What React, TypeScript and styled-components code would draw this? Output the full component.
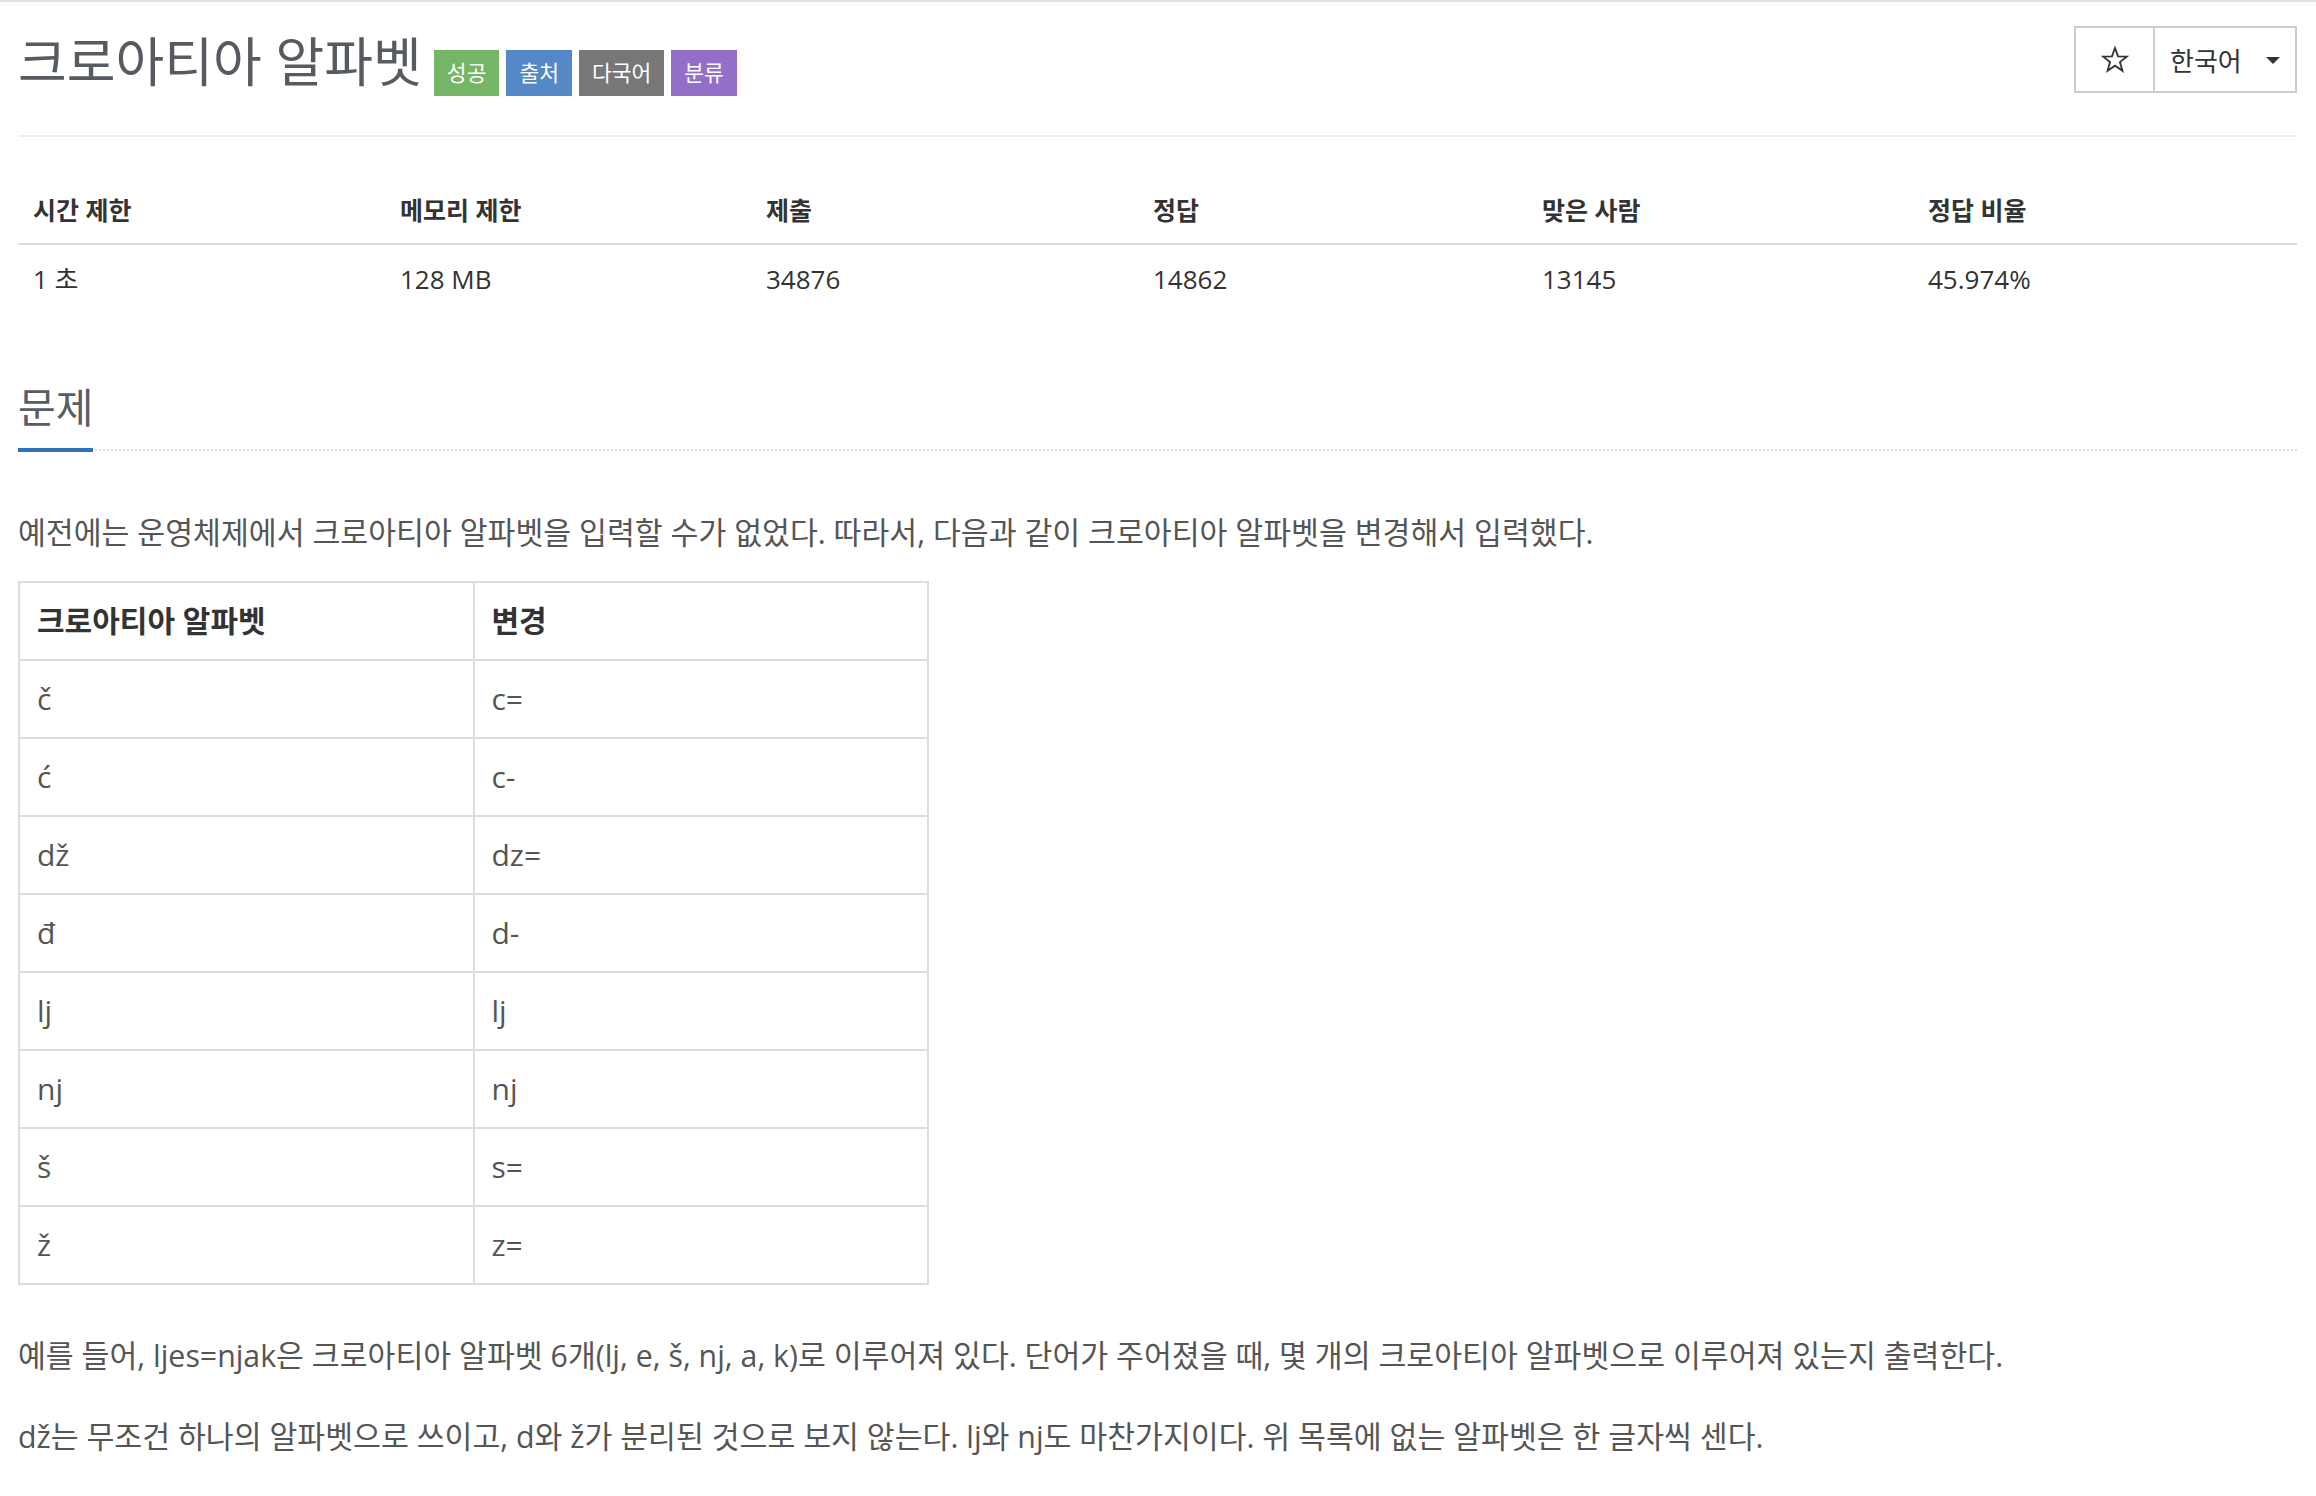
import styled, { createGlobalStyle } from "styled-components";

const GlobalStyle = createGlobalStyle`
  html, body {
    margin: 0;
    padding: 0;
    background: #fff;
  }
  body {
    font-family: "Open Sans", "Noto Sans CJK KR", sans-serif;
    color: #555;
  }
`;

const stats = [
  { label: "시간 제한", value: "1 초" },
  { label: "메모리 제한", value: "128 MB" },
  { label: "제출", value: "34876" },
  { label: "정답", value: "14862" },
  { label: "맞은 사람", value: "13145" },
  { label: "정답 비율", value: "45.974%" },
];

const letters = [
  ["č", "c="],
  ["ć", "c-"],
  ["dž", "dz="],
  ["đ", "d-"],
  ["lj", "lj"],
  ["nj", "nj"],
  ["š", "s="],
  ["ž", "z="],
];

const labels = [
  { text: "성공", color: "#74b566" },
  { text: "출처", color: "#5488c6" },
  { text: "다국어", color: "#777777" },
  { text: "분류", color: "#936fc7" },
];

const App = () => {
  return (
    <>
      <GlobalStyle />
      <Page>
        <Header>
          <TitleRow>
            <Title>크로아티아 알파벳</Title>
            <Labels>
              {labels.map((l) => (
                <Label key={l.text} color={l.color}>
                  {l.text}
                </Label>
              ))}
            </Labels>
          </TitleRow>
          <ButtonGroup>
            <StarButton aria-label="star">
              <svg width="28" height="27" viewBox="0 0 26 25">
                <polygon
                  points="13,1.8 15.8,9.6 24,9.8 17.6,14.9 19.9,22.9 13,18.2 6.1,22.9 8.4,14.9 2,9.8 10.2,9.6"
                  fill="none"
                  stroke="#333"
                  strokeWidth="1.7"
                />
              </svg>
            </StarButton>
            <LangButton>
              한국어
              <Caret />
            </LangButton>
          </ButtonGroup>
        </Header>

        <StatsGrid>
          {stats.map((s) => (
            <StatHead key={s.label}>{s.label}</StatHead>
          ))}
          {stats.map((s) => (
            <StatCell key={s.label}>{s.value}</StatCell>
          ))}
        </StatsGrid>

        <Headline>
          <HeadlineText>문제</HeadlineText>
        </Headline>

        <Description>
          <Paragraph $gap={23}>
            예전에는 운영체제에서 크로아티아 알파벳을 입력할 수가 없었다. 따라서, 다음과 같이 크로아티아
            알파벳을 변경해서 입력했다.
          </Paragraph>

          <AlphabetTable>
            <thead>
              <tr>
                <Th>크로아티아 알파벳</Th>
                <Th>변경</Th>
              </tr>
            </thead>
            <tbody>
              {letters.map(([a, b]) => (
                <tr key={a}>
                  <Td>{a}</Td>
                  <Td>{b}</Td>
                </tr>
              ))}
            </tbody>
          </AlphabetTable>

          <Paragraph>
            예를 들어, ljes=njak은 크로아티아 알파벳 6개(lj, e, š, nj, a, k)로 이루어져 있다. 단어가
            주어졌을 때, 몇 개의 크로아티아 알파벳으로 이루어져 있는지 출력한다.
          </Paragraph>
          <Paragraph>
            dž는 무조건 하나의 알파벳으로 쓰이고, d와 ž가 분리된 것으로 보지 않는다. lj와 nj도
            마찬가지이다. 위 목록에 없는 알파벳은 한 글자씩 센다.
          </Paragraph>
        </Description>
      </Page>
    </>
  );
};

export default App;

// styles
const Page = styled.div`
  border-top: 2px solid #e2e2e8;
  padding: 0 19px 40px 18px;
`;

const Header = styled.div`
  display: flex;
  justify-content: space-between;
  align-items: flex-start;
  padding-top: 24px;
  height: 109px;
  border-bottom: 2px solid #eee;
`;

const TitleRow = styled.div`
  display: flex;
  align-items: flex-start;
`;

const Title = styled.h1`
  margin: 0;
  font-size: 53px;
  line-height: 72px;
  font-weight: 400;
  color: #565a61;
`;

const Labels = styled.div`
  display: flex;
  gap: 7px;
  margin: 24px 0 0 12px;
`;

const Label = styled.span<{ color: string }>`
  display: inline-block;
  height: 46px;
  line-height: 46px;
  padding: 0 13px;
  font-size: 21.5px;
  color: #fff;
  background: ${(p) => p.color};
`;

const ButtonGroup = styled.div`
  display: flex;
`;

const BaseButton = styled.button`
  box-sizing: border-box;
  height: 67px;
  border: 2px solid #ccc;
  background: #fff;
  color: #333;
  font-family: inherit;
  display: flex;
  align-items: center;
  cursor: pointer;
`;

const StarButton = styled(BaseButton)`
  width: 81px;
  justify-content: center;
  padding: 0;
`;

const LangButton = styled(BaseButton)`
  width: 144px;
  margin-left: -2px;
  padding: 0 15px 0 15px;
  font-size: 26px;
  justify-content: space-between;
`;

const Caret = styled.span`
  width: 0;
  height: 0;
  border-top: 7px solid #333;
  border-left: 7px solid transparent;
  border-right: 7px solid transparent;
  margin-top: 2px;
`;

const StatsGrid = styled.div`
  display: grid;
  grid-template-columns: 367px 366px 387px 389px 386px 1fr;
  margin-top: 40px;
  color: #333;
`;

const StatHead = styled.div`
  padding: 15px 15px;
  line-height: 36px;
  font-size: 25px;
  font-weight: 700;
  border-bottom: 2px solid #ddd;
`;

const StatCell = styled.div`
  padding: 16px 15px;
  line-height: 36px;
  font-size: 26px;
`;

const Headline = styled.div`
  display: flex;
  margin-top: 69px;
  border-bottom: 2px dotted #dcdce2;
`;

const HeadlineText = styled.h2`
  margin: 0 0 -3px;
  padding-bottom: 16px;
  font-size: 41px;
  line-height: 50px;
  font-weight: 400;
  color: #585d65;
  border-bottom: 4px solid #2f72b9;
`;

const Description = styled.div`
  padding-top: 57px;
`;

const Paragraph = styled.p<{ $gap?: number }>`
  margin: 0 0 ${(p) => p.$gap ?? 31}px;
  font-size: 30.3px;
  line-height: 50px;
  color: #555;
`;

const AlphabetTable = styled.table`
  border-collapse: collapse;
  width: 911px;
  margin: 0 0 46px;
  table-layout: fixed;
`;

const Th = styled.th`
  border: 2px solid #ddd;
  padding: 0 17px;
  line-height: 76px;
  font-size: 30px;
  font-weight: 700;
  text-align: left;
  color: #333;
`;

const Td = styled.td`
  border: 2px solid #ddd;
  padding: 0 17px;
  line-height: 76px;
  font-size: 30px;
  color: #555;
`;
